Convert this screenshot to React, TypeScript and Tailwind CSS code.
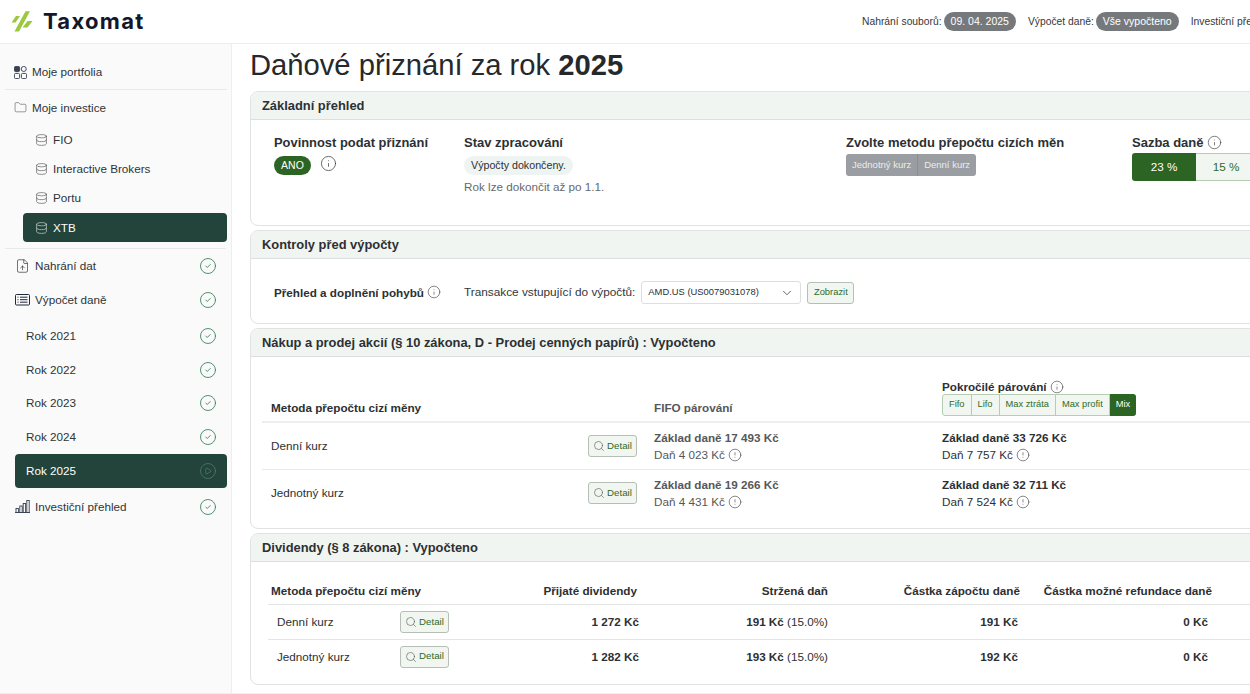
import { ChevronDown, CircleAlert, CircleCheck, CirclePlay, Database, FileUp, Folder, Info, Search } from "lucide-react"
import type { ReactNode } from "react"

const font = "font-['Liberation_Sans',Arial,sans-serif]"

function PortfolioIcon() {
  return (
    <svg width="13" height="13" viewBox="0 0 14 14" fill="none" stroke="#374151" strokeWidth="1">
      <rect x="0.5" y="0.5" width="5.5" height="5.5" rx="1.2" fill="#374151" />
      <circle cx="10.5" cy="3.2" r="2.7" />
      <rect x="0.5" y="8" width="5.5" height="5.5" rx="1.2" />
      <rect x="8" y="8" width="5.5" height="5.5" rx="1.2" />
    </svg>
  )
}

function ListIcon() {
  return (
    <svg width="15" height="12" viewBox="0 0 15 12" fill="none" stroke="#1f2937" strokeWidth="1">
      <rect x="0.5" y="0.5" width="14" height="10.5" rx="1" />
      <path d="M2.5 3.2h1M5 3.2h7.5M2.5 5.7h1M5 5.7h7.5M2.5 8.2h1M5 8.2h7.5" />
    </svg>
  )
}

function BarsIcon() {
  return (
    <svg width="15" height="13" viewBox="0 0 15 13" fill="none" stroke="#374151" strokeWidth="0.9">
      <path d="M0 12.5h15" />
      <rect x="1" y="8.5" width="2.4" height="4" />
      <rect x="4.8" y="6" width="2.4" height="6.5" />
      <rect x="8.2" y="3.5" width="2.4" height="9" />
      <rect x="11.8" y="0.5" width="2.4" height="12" />
    </svg>
  )
}

function Logo() {
  return (
    <svg width="22" height="21" viewBox="0 0 22 21" fill="#9bc83c">
      <path d="M5 5h4l-4.5 6.5h-4z" />
      <path d="M14.5 0.3h4.5L8 20.5H3.5z" />
      <path d="M16.5 10h5l-5 6.5h-5z" />
    </svg>
  )
}

function Check() {
  return <CircleCheck className="w-[18px] h-[18px] text-[#35815a]" strokeWidth={1.15} />
}

function SideRow({ icon, label, done, height, className = "" }: { icon?: ReactNode; label: string; done?: boolean; height: string; className?: string }) {
  return (
    <div className={`flex items-center ${height} ${className} text-[11.7px] text-[#2f3437]`}>
      {icon && <span className="flex items-center">{icon}</span>}
      <span>{label}</span>
      {done && <span className="ml-auto mr-[10px] flex"><Check /></span>}
    </div>
  )
}

function Broker({ label, active }: { label: string; active?: boolean }) {
  return (
    <div className={`flex items-center h-[29.3px] ml-[23px] mr-[4px] pl-[12px] rounded text-[11.7px] ${active ? "bg-[#23443a] text-white" : "text-[#2f3437]"}`}>
      <Database className={`w-[13px] h-[14px] mr-[5px] ${active ? "text-[#d3dcd8]" : "text-[#555]"}`} strokeWidth={1.2} />
      {label}
    </div>
  )
}

function Card({ title, height, children }: { title: string; height: string; children: ReactNode }) {
  return (
    <section className={`${height} w-[1060px] shrink-0 border border-[#e0e3e1] rounded-[8px] overflow-hidden bg-white`}>
      <h2 className="h-[28px] px-[11px] flex items-center bg-[#f1f5f2] border-b border-[#dcdfdd] text-[12.9px] font-bold text-[#2c3033]">{title}</h2>
      {children}
    </section>
  )
}

function DetailButton() {
  return (
    <button className="w-[49px] h-[22px] shrink-0 flex items-center justify-center gap-[2px] bg-[#f1f6f0] border border-[#b5bfb6] rounded-[3px] text-[9.7px] text-[#2f6b2a]">
      <Search className="w-[12px] h-[12px] text-[#555]" strokeWidth={1.2} />
      Detail
    </button>
  )
}

function StatusPill({ children }: { children: ReactNode }) {
  return <span className="h-[19px] px-[7px] ml-[2px] flex items-center rounded-full bg-[#76797c] text-white text-[10.5px]">{children}</span>
}

function PairRow({ label, fifoBase, fifoTax, mixBase, mixTax, height, border }: { label: string; fifoBase: string; fifoTax: string; mixBase: string; mixTax: string; height: string; border?: boolean }) {
  return (
    <div className={`flex items-center ${height} ml-[11px] ${border ? "border-b border-[#e8eaea]" : ""}`}>
      <span className="w-[326px] shrink-0 pl-[9px] text-[11.7px] text-[#2c3033]">{label}</span>
      <DetailButton />
      <div className="w-[288px] shrink-0 ml-[17px] text-[11.7px] text-[#55585a]">
        <div className="font-bold leading-[17px]">{fifoBase}</div>
        <div className="flex items-center gap-[3px] leading-[18px]">{fifoTax}<CircleAlert className="w-[14px] h-[14px] text-[#333]" strokeWidth={1} /></div>
      </div>
      <div className="text-[11.7px] text-[#2c3033]">
        <div className="font-bold leading-[17px]">{mixBase}</div>
        <div className="flex items-center gap-[3px] leading-[18px]">{mixTax}<CircleAlert className="w-[14px] h-[14px] text-[#333]" strokeWidth={1} /></div>
      </div>
    </div>
  )
}

function DividendRow({ label, received, withheld, credit, height, border }: { label: string; received: string; withheld: string; credit: string; height: string; border?: boolean }) {
  return (
    <div className={`flex items-center ${height} text-[11.7px] text-[#2c3033] ${border ? "border-b border-[#e4e6e6]" : ""}`}>
      <span className="w-[132px] shrink-0 pl-[9px]">{label}</span>
      <DetailButton />
      <span className="w-[190px] shrink-0 text-right font-bold">{received}</span>
      <span className="w-[189px] shrink-0 text-right"><b>{withheld}</b> (15.0%)</span>
      <span className="w-[190px] shrink-0 text-right font-bold">{credit}</span>
      <span className="w-[190px] shrink-0 text-right font-bold">0 Kč</span>
    </div>
  )
}

const pairing = ["Fifo", "Lifo", "Max ztráta", "Max profit"]

export default function App() {
  return (
    <div className={`w-screen h-screen overflow-hidden bg-white flex flex-col ${font}`}>
      <header className="h-[44px] shrink-0 flex items-center border-b border-[#eeeeee] overflow-hidden whitespace-nowrap">
        <div className="ml-[11px] flex items-center gap-[10px] w-[851px] shrink-0">
          <Logo />
          <span className="font-['Inter',sans-serif] text-[22px] font-bold tracking-[1.3px] text-[#14172a]">Taxomat</span>
        </div>
        <div className="flex items-center text-[10.3px] text-[#33373a]">
          <span>Nahrání souborů:</span>
          <StatusPill>09. 04. 2025</StatusPill>
          <span className="ml-[12px]">Výpočet daně:</span>
          <StatusPill>Vše vypočteno</StatusPill>
          <span className="ml-[12px]">Investiční přehled:</span>
        </div>
      </header>

      <div className="flex-1 flex min-h-0 border-b border-[#eeeeee]">
        <aside className="w-[232px] shrink-0 bg-[#fafafa] border-r border-[#eeeeee] pt-[11px]">
          <SideRow icon={<span className="w-[18px] flex"><PortfolioIcon /></span>} label="Moje portfolia" height="h-[35px]" className="ml-[5px] pl-[9px] mr-[4px] border-b border-[#e9e9e9]" />
          <SideRow icon={<span className="w-[18px] flex"><Folder className="w-[13px] h-[13px] text-[#444]" strokeWidth={1} /></span>} label="Moje investice" height="h-[35px]" className="pl-[14px]" />
          <div>
            <Broker label="FIO" />
            <Broker label="Interactive Brokers" />
            <Broker label="Portu" />
            <Broker label="XTB" active />
          </div>
          <div className="mt-[6px] mx-[5px] border-t border-[#e9e9e9]" />
          <SideRow icon={<span className="w-[20px] flex"><FileUp className="w-[15px] h-[16px] text-[#333]" strokeWidth={1.1} /></span>} label="Nahrání dat" done height="h-[34px]" className="pl-[15px] pb-[1px] mr-[4px]" />
          <SideRow icon={<span className="w-[20px] flex"><ListIcon /></span>} label="Výpočet daně" done height="h-[34px]" className="pl-[15px] mr-[4px]" />
          <div className="pt-[2px]">
            <SideRow label="Rok 2021" done height="h-[33.6px]" className="pl-[26px] mr-[4px]" />
            <SideRow label="Rok 2022" done height="h-[33.6px]" className="pl-[26px] mr-[4px]" />
            <SideRow label="Rok 2023" done height="h-[33.6px]" className="pl-[26px] mr-[4px]" />
            <SideRow label="Rok 2024" done height="h-[33.6px]" className="pl-[26px] mr-[4px]" />
            <div className="flex items-center h-[34px] ml-[15px] mr-[4px] pl-[11px] pr-[10px] rounded bg-[#23443a] text-white text-[11.7px]">
              Rok 2025
              <CirclePlay className="ml-auto w-[18px] h-[18px] text-[#4f7d69]" strokeWidth={1} />
            </div>
          </div>
          <SideRow icon={<span className="w-[20px] flex"><BarsIcon /></span>} label="Investiční přehled" done height="h-[38px]" className="pl-[15px] mr-[4px]" />
        </aside>

        <main className="flex-1 min-w-0 overflow-hidden pl-[18px] flex flex-col gap-[4px]">
          <h1 className="h-[43px] shrink-0 flex items-center text-[29.2px] text-[#26292b]">
            Daňové přiznání za rok&nbsp;<b>2025</b>
          </h1>

          <Card title="Základní přehled" height="h-[135px]">
            <div className="flex pt-[14px] pl-[23px] text-[#2c3033]">
              <div className="w-[190px] shrink-0">
                <h3 className="text-[12.9px] font-bold leading-[17px]">Povinnost podat přiznání</h3>
                <div className="flex items-center gap-[9px] mt-[5px]">
                  <span className="h-[19px] w-[37px] flex items-center justify-center rounded-full bg-[#2c6423] text-white text-[10.5px]">ANO</span>
                  <Info className="w-[17px] h-[17px] text-[#333] -mt-[4px]" strokeWidth={1} />
                </div>
              </div>
              <div className="w-[382px] shrink-0">
                <h3 className="text-[13px] font-bold leading-[17px]">Stav zpracování</h3>
                <span className="inline-flex items-center h-[19px] mt-[5px] px-[7px] rounded-full bg-[#eef4f2] text-[10.7px]">Výpočty dokončeny.</span>
                <p className="mt-[4px] text-[11.7px] text-[#666a6c] leading-[14px]">Rok lze dokončit až po 1.1.</p>
              </div>
              <div className="w-[286px] shrink-0">
                <h3 className="text-[13px] font-bold leading-[17px]">Zvolte metodu přepočtu cizích měn</h3>
                <div className="flex w-fit mt-[3px] rounded-[3px] bg-[#9a9da1] text-[#eceded] text-[9.5px] h-[22px]">
                  <span className="px-[6px] flex items-center border-r border-[#8a8d91]">Jednotný kurz</span>
                  <span className="px-[6px] flex items-center">Denní kurz</span>
                </div>
              </div>
              <div className="shrink-0">
                <h3 className="flex items-center gap-[3px] text-[13px] font-bold leading-[17px]">Sazba daně <Info className="w-[15px] h-[15px] text-[#333]" strokeWidth={1} /></h3>
                <div className="flex mt-[2px] h-[28px] text-[11.7px] w-[200px]">
                  <span className="w-[64px] flex items-center justify-center rounded-l-[3px] bg-[#2c6423] text-white">23 %</span>
                  <span className="w-[60px] flex items-center justify-center bg-[#f1f6f0] border-y border-[#b5cdb2] text-[#2f6b2a]">15 %</span>
                </div>
              </div>
            </div>
          </Card>

          <Card title="Kontroly před výpočty" height="h-[94px]">
            <div className="flex items-center h-[65px] pt-[2px] pl-[23px] text-[#2c3033]">
              <h3 className="w-[190px] shrink-0 flex items-center gap-[3px] text-[11.7px] font-bold">Přehled a doplnění pohybů <Info className="w-[14px] h-[14px] text-[#333]" strokeWidth={1} /></h3>
              <span className="text-[11.8px] text-[#33373a]">Transakce vstupující do výpočtů:</span>
              <div className="ml-[6px] w-[160px] h-[23px] px-[6px] flex items-center justify-between border border-[#dcdfdd] rounded-[3px] text-[9.4px]">
                AMD.US (US0079031078)
                <ChevronDown className="w-[14px] h-[14px] text-[#333]" strokeWidth={1.3} />
              </div>
              <button className="ml-[6px] w-[47px] h-[22px] bg-[#f1f6f0] border border-[#b5bfb6] rounded-[3px] text-[9.4px] text-[#2f6b2a]">Zobrazit</button>
            </div>
          </Card>

          <Card title="Nákup a prodej akcií (§ 10 zákona, D - Prodej cenných papírů) : Vypočteno" height="h-[201px]">
            <div className="flex items-end h-[66px] ml-[11px] border-b-2 border-[#eeeeee] pb-[4px] text-[11.7px] font-bold">
              <span className="w-[392px] shrink-0 pl-[9px] text-[#2c3033]">Metoda přepočtu cizí měny</span>
              <span className="w-[288px] shrink-0 text-[#55585a]">FIFO párování</span>
              <div className="text-[#2c3033]">
                <div className="flex items-center gap-[3px] leading-[15px]">Pokročilé párování <Info className="w-[14px] h-[14px] text-[#333]" strokeWidth={1} /></div>
                <div className="flex h-[22px] mb-[1px] text-[9.3px] font-normal text-[#2f6b2a] bg-[#f1f6f0] border border-[#b5cdb2] rounded-[3px] w-fit">
                  {pairing.map((p) => (
                    <span key={p} className="px-[6px] flex items-center border-r border-[#b5cdb2]">{p}</span>
                  ))}
                  <span className="px-[6px] flex items-center bg-[#2c6423] text-white rounded-r-[3px] -my-px -mr-px">Mix</span>
                </div>
              </div>
            </div>
            <PairRow label="Denní kurz" fifoBase="Základ daně 17 493 Kč" fifoTax="Daň 4 023 Kč" mixBase="Základ daně 33 726 Kč" mixTax="Daň 7 757 Kč" height="h-[47px]" border />
            <PairRow label="Jednotný kurz" fifoBase="Základ daně 19 266 Kč" fifoTax="Daň 4 431 Kč" mixBase="Základ daně 32 711 Kč" mixTax="Daň 7 524 Kč" height="h-[46px]" />
          </Card>

          <Card title="Dividendy (§ 8 zákona) : Vypočteno" height="h-[152px]">
            <div className="ml-[17px] mr-[20px]">
              <div className="flex items-end h-[43px] pb-[4px] border-b border-[#e4e6e6] text-[11.7px] font-bold text-[#2c3033] whitespace-nowrap">
                <span className="w-[249px] shrink-0 pl-[3px]">Metoda přepočtu cizí měny</span>
                <span className="w-[120px] shrink-0 text-right">Přijaté dividendy</span>
                <span className="w-[191px] shrink-0 text-right">Stržená daň</span>
                <span className="w-[192px] shrink-0 text-right">Částka zápočtu daně</span>
                <span className="w-[192px] shrink-0 text-right">Částka možné refundace daně</span>
              </div>
              <DividendRow label="Denní kurz" received="1 272 Kč" withheld="191 Kč" credit="191 Kč" height="h-[35px]" border />
              <DividendRow label="Jednotný kurz" received="1 282 Kč" withheld="193 Kč" credit="192 Kč" height="h-[33px]" />
            </div>
          </Card>
        </main>
      </div>
    </div>
  )
}
